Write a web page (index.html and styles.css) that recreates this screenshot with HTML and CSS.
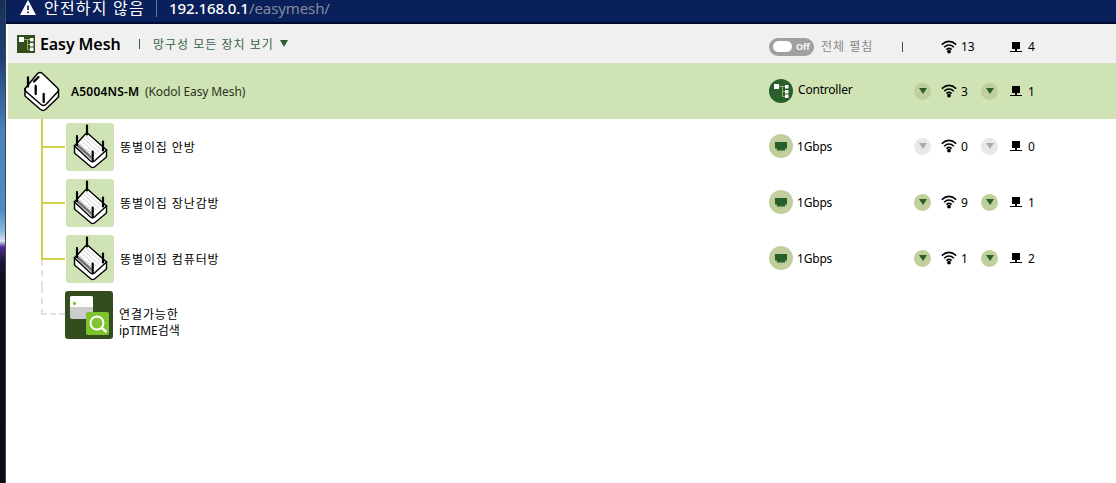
FILE: index.html
```html
<!DOCTYPE html>
<html lang="ko">

<head>
    <meta charset="UTF-8">
    <meta name="viewport" content="width=device-width, initial-scale=1.0">
    <title>Easy Mesh</title>
    <link rel="stylesheet" href="styles.css">
</head>

<body>

    <!-- shared icons -->
    <svg class="defs" width="0" height="0">
        <symbol id="wifi" viewBox="0 0 16 14">
            <path d="M.8 4.6Q8-1.8 15.2 4.6M3.1 7.2Q8 2.8 12.9 7.2M5.4 9.6Q8 7.2 10.6 9.6" fill="none" stroke="#000" stroke-width="1.5"/>
            <circle cx="8" cy="11.600" r="1.900"/>
        </symbol>
        <symbol id="pc" viewBox="0 0 12 10">
            <path d="M2 0h8v7H7v2h5v1H0V9h5V7H2z"/>
        </symbol>
        <symbol id="tree" viewBox="0 0 18 18">
            <path d="M7 4.500h6M10.500 4.500v10H13M10.500 9.500H13" fill="none" stroke="#8db45e" stroke-width="1"/>
            <path d="M2 2h5v5H2zM13 3h3.500v3.500H13zM13 8h3.500v3.500H13zM13 12.500h3.500V16H13z" fill="#fff"/>
        </symbol>
        <symbol id="router" viewBox="0 0 48 48">
            <path d="M8.500 22.500v7.500L25 44q1.500 1.200 3.500 0L40.500 34v-7.500z" fill="#fff" stroke="#000" stroke-width="1.400"/>
            <path d="M19.500 11q1.500-1.300 3 0l18 16-12 11q-2 1.500-4 0L8.500 23z" fill="#fff" stroke="#000" stroke-width="1.400"/>
            <path d="M10 23 25.500 36.500V33L12.500 21z" fill="#777"/>
            <path d="M13 20l15 13.500M15.200 17.700l15.500 13.800M17.400 15.400l16 14.200M19.600 13.100l16.500 14.500" stroke="#d0d0d0" stroke-width="1"/>
            <path d="M21 2.500v9M11 13v9M37 18.500v9M26.700 28.500v9" stroke="#000" stroke-width="2.200" stroke-linecap="round"/>
        </symbol>
    </svg>

    <div class="desktop"></div>

    <div class="window">
        <div class="addressBar">
            <svg class="warning" width="16" height="16" viewBox="0 0 16 16">
                <path d="M8 0 16 15H0z" fill="#fff"/>
                <path d="M8 5.500v4.500M8 11.500v1.800" stroke="#0a205a" stroke-width="1.700"/>
            </svg>
            <span class="security">안전하지 않음</span>
            <span class="divider"></span>
            <span class="host">192.168.0.1</span><span class="path">/easymesh/</span>
        </div>

        <div class="page">
            <div class="row header">
                <svg class="logo" width="18" height="18"><rect width="18" height="18" fill="#334d1f"/><use href="#tree"/></svg>
                <h1 class="title">Easy Mesh</h1>
                <span class="bar"></span>
                <span class="filter">망구성 모든 장치 보기</span>
                <span class="arrow"></span>
                <div class="stats">
                    <div class="status">
                        <span class="toggle"><i></i>Off</span>
                        <span class="expand">전체 펼침</span>
                        <span class="bar"></span>
                    </div>
                    <span></span>
                    <svg width="16" height="14"><use href="#wifi"/></svg><span class="count">13</span>
                    <span></span>
                    <svg width="12" height="10"><use href="#pc"/></svg><span class="count">4</span>
                </div>
            </div>

            <div class="row controller">
                <svg class="mainRouter" width="40" height="42" viewBox="0 0 40 42">
                    <path d="M3 18.500v7.500l15.500 13.500q2.500 1.800 5 0L36.500 27v-6z" fill="#fff" stroke="#000" stroke-width="1.500"/>
                    <path d="M15.500 3.500q2.500-2 5 0l15 14.500q2 2 0 4L24 34.500q-2.500 2-5 0L4 21.500q-2-2 0-4z" fill="#fff" stroke="#000" stroke-width="1.500"/>
                    <path d="M6 7.500v9M13.700 16v8M21.700 24v8M12 11.500l4.500-4.500" stroke="#000" stroke-width="2.300" stroke-linecap="round"/>
                </svg>
                <b class="model">A5004NS-M</b>
                <span class="network">(Kodol Easy Mesh)</span>
                <div class="stats">
                    <div class="status">
                        <span class="badge dark"><svg width="18" height="18"><use href="#tree"/></svg></span>
                        <span class="role">Controller</span>
                    </div>
                    <span class="caret pale"></span>
                    <svg width="16" height="14"><use href="#wifi"/></svg><span class="count">3</span>
                    <span class="caret pale"></span>
                    <svg width="12" height="10"><use href="#pc"/></svg><span class="count">1</span>
                </div>
            </div>

            <div class="row agent">
                <div class="branch"><i></i><i></i></div>
                <svg class="device" width="48" height="48"><use href="#router"/></svg>
                <span class="name">똥별이집 안방</span>
                <div class="stats">
                    <div class="status"><span class="badge"><i class="port"></i></span><span class="speed">1Gbps</span></div>
                    <span class="caret off"></span>
                    <svg width="16" height="14"><use href="#wifi"/></svg><span class="count">0</span>
                    <span class="caret off"></span>
                    <svg width="12" height="10"><use href="#pc"/></svg><span class="count">0</span>
                </div>
            </div>

            <div class="row agent">
                <div class="branch"><i></i><i></i></div>
                <svg class="device" width="48" height="48"><use href="#router"/></svg>
                <span class="name">똥별이집 장난감방</span>
                <div class="stats">
                    <div class="status"><span class="badge"><i class="port"></i></span><span class="speed">1Gbps</span></div>
                    <span class="caret"></span>
                    <svg width="16" height="14"><use href="#wifi"/></svg><span class="count">9</span>
                    <span class="caret"></span>
                    <svg width="12" height="10"><use href="#pc"/></svg><span class="count">1</span>
                </div>
            </div>

            <div class="row agent">
                <div class="branch last"><i></i><i></i></div>
                <svg class="device" width="48" height="48"><use href="#router"/></svg>
                <span class="name">똥별이집 컴퓨터방</span>
                <div class="stats">
                    <div class="status"><span class="badge"><i class="port"></i></span><span class="speed">1Gbps</span></div>
                    <span class="caret"></span>
                    <svg width="16" height="14"><use href="#wifi"/></svg><span class="count">1</span>
                    <span class="caret"></span>
                    <svg width="12" height="10"><use href="#pc"/></svg><span class="count">2</span>
                </div>
            </div>

            <div class="row search">
                <div class="branch dashed"><i></i></div>
                <svg class="scan" width="48" height="48" viewBox="0 0 48 48">
                    <rect x="5" y="5" width="23" height="23" rx="2" fill="#ccc"/>
                    <path d="M7 5h19q2 0 2 2v9H5V7q0-2 2-2z" fill="#fff"/>
                    <circle cx="9.500" cy="12.500" r="1.700" fill="#7dc42f"/>
                    <rect x="21" y="21" width="23" height="23" rx="2" fill="#7dc42f"/>
                    <circle cx="32" cy="32" r="6.500" fill="none" stroke="#fff" stroke-width="2"/>
                    <path d="m36.800 36.800 4 3.700" stroke="#fff" stroke-width="2.500" stroke-linecap="round"/>
                </svg>
                <span class="name">연결가능한<br><span class="brand">ipTIME검색</span></span>
            </div>
        </div>
    </div>

</body>

</html>
```
FILE: styles.css
```css
body {
    margin: 0;
    display: flex;
    height: 483px;
    overflow: hidden;
    background-color: #fff;
    font-family: "Noto Sans", "Noto Sans CJK KR", sans-serif;
    font-size: 12px;
    line-height: 16px;
    color: #000;
}

.defs {
    position: absolute;
}

svg {
    display: block;
    flex: none;
}

span {
    white-space: nowrap;
}

.desktop {
    width: 5px;
    flex: none;
    border-right: 1px solid #43474d;
    background: linear-gradient(#163057 0, #1e4276 60px, #4a82bb 130px, #4d8dc4 210px, #8fb9dc 232px, #dce2f2 241px, #4b2c91 247px, #1b1436 262px, #0b0e18 285px, #090c14 100%);
}

.window {
    flex: 1;
    min-width: 0;
}

.addressBar {
    display: flex;
    align-items: center;
    height: 24px;
    padding: 0 0 6px 14px;
    box-sizing: border-box;
    border-bottom: 2px solid #030a31;
    background-color: #0a205a;
    color: #fff;
    font-size: 16px;
}

.warning {
    margin-right: 8px;
}

.security {
    width: 112px;
    letter-spacing: 1.2px;
}

.divider {
    width: 1px;
    height: 17px;
    margin-right: 12px;
    background-color: #6c7899;
}

.host {
    width: 80px;
    font-size: 15px;
    font-weight: 500;
    letter-spacing: -0.1px;
}

.path {
    font-size: 15px;
    color: #848b9d;
    letter-spacing: -0.1px;
}

.page {
    padding-left: 2px;
}

.row {
    display: flex;
    align-items: center;
    height: 56px;
    box-sizing: border-box;
}

.header {
    height: 39px;
    padding-left: 9px;
    background-color: #f0f0f0;
}

.logo {
    margin-right: 5px;
}

.title {
    width: 99px;
    margin: 0;
    font-size: 16px;
    font-weight: 600;
    line-height: 20px;
    letter-spacing: -0.1px;
}

.bar {
    width: 1px;
    height: 10px;
    background-color: #2c6233;
}

.filter {
    width: 127px;
    margin-left: 13px;
    padding-top: 3px;
    color: #376541;
    letter-spacing: 1px;
}

.arrow {
    border-top: 7px solid #285f2c;
    border-left: 4px solid transparent;
    border-right: 4px solid transparent;
}

.controller {
    padding-left: 14px;
    background-color: #cfe3b4;
}

.mainRouter {
    margin-right: 9px;
}

.model {
    width: 74px;
    padding-top: 2px;
    font-weight: 600;
    letter-spacing: 0.2px;
}

.network {
    padding-top: 2px;
    color: #2b3325;
    letter-spacing: -0.1px;
}

.agent,
.search {
    padding-left: 33px;
}

.branch {
    display: flex;
    flex-direction: column;
    width: 24px;
    height: 56px;
    margin-right: 1px;
}

.branch i {
    height: 29px;
    box-sizing: border-box;
    border-left: 2px solid #cfd146;
}

.branch i:first-child {
    border-bottom: 2px solid #cfd146;
}

.branch i:last-child:not(:first-child) {
    height: 27px;
}

.branch.last i:last-child {
    border-left: 2px dashed #e2e2e2;
}

.branch.dashed {
    margin-right: 0;
}

.branch.dashed i {
    height: 28px;
    border-left: 2px dashed #e2e2e2;
    border-bottom: 2px dashed #e2e2e2;
}

.device,
.scan {
    border-radius: 3px;
    background-color: #cfe3b4;
}

.scan {
    background-color: #334d1f;
}

.name {
    margin-left: 6px;
    padding-top: 1px;
    letter-spacing: 0.9px;
}

.search .name {
    padding-top: 15px;
}

.brand {
    letter-spacing: 0;
}

/* status, clients over wifi, clients over cable */
.stats {
    display: grid;
    grid-template-columns: 145px 27px 20px 20px 29px 18px 88px;
    align-items: center;
    margin-left: auto;
}

.header .stats {
    padding-top: 6px;
}

.agent .stats {
    padding-bottom: 2px;
}

.status {
    display: flex;
    align-items: center;
}

.toggle {
    display: flex;
    align-items: center;
    gap: 4px;
    width: 45px;
    height: 18px;
    padding-left: 4px;
    box-sizing: border-box;
    border-radius: 9px;
    background-color: #a0a0a0;
    color: #fff;
    font-size: 9px;
    font-weight: 600;
}

.toggle i {
    width: 19px;
    height: 11px;
    border-radius: 6px;
    background-color: #fff;
}

.expand {
    width: 81px;
    margin-left: 7px;
    color: #888;
    letter-spacing: 1px;
}

.badge {
    display: flex;
    align-items: center;
    justify-content: center;
    width: 24px;
    height: 24px;
    margin-right: 4px;
    border-radius: 50%;
    background-color: #bfd09c;
}

.badge.dark {
    background-color: #285f2c;
}

.port {
    width: 12px;
    height: 9px;
    background-color: #285f2c;
    clip-path: polygon(0 0, 100% 0, 100% 78%, 84% 78%, 84% 100%, 16% 100%, 16% 78%, 0 78%);
}

.role {
    margin-left: 1px;
    padding-bottom: 3px;
    letter-spacing: -0.2px;
}

.speed {
    padding-top: 2px;
    letter-spacing: -0.2px;
}

.count {
    padding-top: 1px;
}

.caret {
    display: flex;
    align-items: center;
    justify-content: center;
    width: 17px;
    height: 17px;
    border-radius: 50%;
    background-color: #bfd09c;
}

.caret::before {
    content: "";
    border-top: 6px solid #285f2c;
    border-left: 4px solid transparent;
    border-right: 4px solid transparent;
}

.caret.off {
    background-color: #e8e8e8;
}

.caret.off::before {
    border-top-color: #aaa;
}
```
